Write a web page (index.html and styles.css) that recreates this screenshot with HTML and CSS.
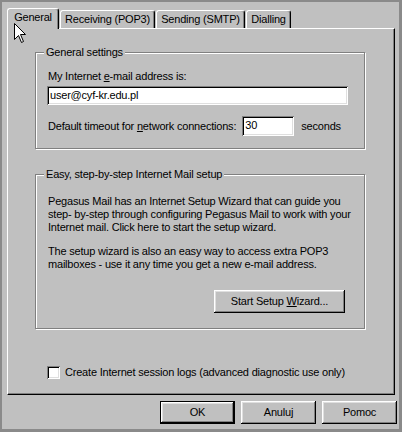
FILE: index.html
```html
<!DOCTYPE html>
<html lang="en">
<head>
  <meta charset="UTF-8" />
  <title>Internet Options</title>
  <link rel="stylesheet" href="styles.css">
</head>
<body>
  <div class="dialog">
    <div class="tabs">
      <div class="tab active tab-general">General</div>
      <div class="tab tab-pop3">Receiving (POP3)</div>
      <div class="tab tab-smtp">Sending (SMTP)</div>
      <div class="tab tab-dial">Dialling</div>
    </div>
    <div class="panel">
      <fieldset class="group group-general">
        <legend>General settings</legend>
        <div class="label">My Internet <u>e</u>-mail address is:</div>
        <div class="field field-email">user@cyf-kr.edu.pl</div>
        <div class="row">
          <span class="label">Default timeout for <u>n</u>etwork connections:</span>
          <div class="field field-timeout">30</div>
          <span class="label">seconds</span>
        </div>
      </fieldset>
      <fieldset class="group group-wizard">
        <legend>Easy, step-by-step Internet Mail setup</legend>
        <p class="text">Pegasus Mail has an Internet Setup Wizard that can guide you<br>step- by-step through configuring Pegasus Mail to work with your<br>Internet mail. Click here to start the setup wizard.</p>
        <p class="text">The setup wizard is also an easy way to access extra POP3<br>mailboxes - use it any time you get a new e-mail address.</p>
        <div class="wizard-row">
          <button class="btn btn-wizard">Start Setup <u>W</u>izard...</button>
        </div>
      </fieldset>
      <div class="check-row">
        <span class="checkbox"></span>
        <span class="label">Create Internet session logs (advanced diagnostic use only)</span>
      </div>
    </div>
    <div class="buttons">
      <button class="btn default">OK</button>
      <button class="btn">Anuluj</button>
      <button class="btn">Pomoc</button>
    </div>
    <svg class="cursor" width="13" height="21" viewBox="0 0 13 21">
      <path d="M0.5 0.5 L0.5 16.5 L4.5 12.5 L7.5 19.5 L9.5 18.5 L6.5 11.5 L11.5 11.5 Z" fill="#fff" stroke="#000" stroke-width="1"/>
    </svg>
  </div>
</body>
</html>
```

FILE: styles.css
```css
body {
  margin: 0;
  background: #c0c0c0;
  font-family: 'Liberation Sans', Arial, sans-serif;
  font-size: 11px;
  line-height: 13px;
  letter-spacing: -0.2px;
  color: #000;
}
.dialog {
  position: relative;
  width: 402px;
  height: 432px;
  box-sizing: border-box;
  border-style: solid;
  border-color: #8a8a8a;
  border-width: 2px 3px 3px 2px;
  background: #c0c0c0;
}
.tabs {
  position: relative;
  z-index: 1;
  display: flex;
  align-items: flex-end;
  height: 20px;
  margin: 6px 0 0 5px;
}
.tab {
  box-sizing: border-box;
  height: 18px;
  padding-top: 2px;
  margin-left: 1px;
  text-align: center;
  white-space: nowrap;
  background: #c0c0c0;
  border-top: 1px solid #fff;
  border-left: 1px solid #fff;
  border-right: 1px solid #000;
  border-radius: 3px 3px 0 0;
  box-shadow: inset -1px 0 #808080;
}
.tab.active {
  height: 21px;
  margin-left: 0;
  margin-bottom: -1px;
}
.tab-general { width: 52px; }
.tab-pop3 { width: 95px; }
.tab-smtp { width: 89px; }
.tab-dial { width: 45px; }
.panel {
  box-sizing: border-box;
  width: 388px;
  height: 367px;
  margin-left: 5px;
  padding: 17px 0 0 27px;
  border-top: 1px solid #fff;
  border-left: 1px solid #fff;
  border-right: 1px solid #000;
  border-bottom: 1px solid #000;
  box-shadow: inset -1px -1px #808080;
}
.group {
  box-sizing: border-box;
  width: 330px;
  margin: 0;
  padding: 11px 0 0 12px;
  border: 1px solid #808080;
  box-shadow: inset 1px 1px #fff, 1px 1px #fff;
}
.group legend {
  margin-left: -4px;
  padding: 0 2px;
  background: #c0c0c0;
  line-height: 13px;
}
.group-general {
  height: 103px;
}
.group-wizard {
  height: 161px;
  margin-top: 19px;
  padding-top: 14px;
}
.field {
  box-sizing: border-box;
  height: 19px;
  padding: 3px 0 0 3px;
  background: #fff;
  white-space: nowrap;
  box-shadow: inset 1px 1px #808080, inset -1px -1px #fff, inset 2px 2px #000, inset -2px -2px #dfdfdf;
}
.field-email {
  width: 301px;
  margin: 3px 0 0 -1px;
}
.row {
  display: flex;
  align-items: center;
  margin-top: 11px;
}
.field-timeout {
  width: 52px;
  height: 20px;
  margin: 0 7px 0 6px;
}
.text {
  margin: 0 0 11px;
  white-space: nowrap;
}
.wizard-row {
  display: flex;
  justify-content: flex-end;
  padding-right: 19px;
  margin-top: 19px;
}
.btn {
  box-sizing: border-box;
  width: 75px;
  height: 23px;
  padding: 0;
  border: none;
  background: #c0c0c0;
  font: inherit;
  letter-spacing: inherit;
  color: #000;
  box-shadow: inset -1px -1px #000, inset 1px 1px #fff, inset -2px -2px #808080, inset 2px 2px #dfdfdf;
}
.btn.default {
  border: 1px solid #000;
}
.btn-wizard {
  width: 131px;
}
.check-row {
  display: flex;
  align-items: center;
  gap: 5px;
  margin: 37px 0 0 12px;
}
.checkbox {
  box-sizing: border-box;
  width: 13px;
  height: 13px;
  background: #fff;
  box-shadow: inset 1px 1px #808080, inset -1px -1px #fff, inset 2px 2px #000, inset -2px -2px #dfdfdf;
}
.buttons {
  display: flex;
  justify-content: flex-end;
  gap: 6px;
  margin-top: 6px;
  padding-right: 2px;
}
.cursor {
  position: absolute;
  left: 12px;
  top: 21px;
  z-index: 2;
}
```
